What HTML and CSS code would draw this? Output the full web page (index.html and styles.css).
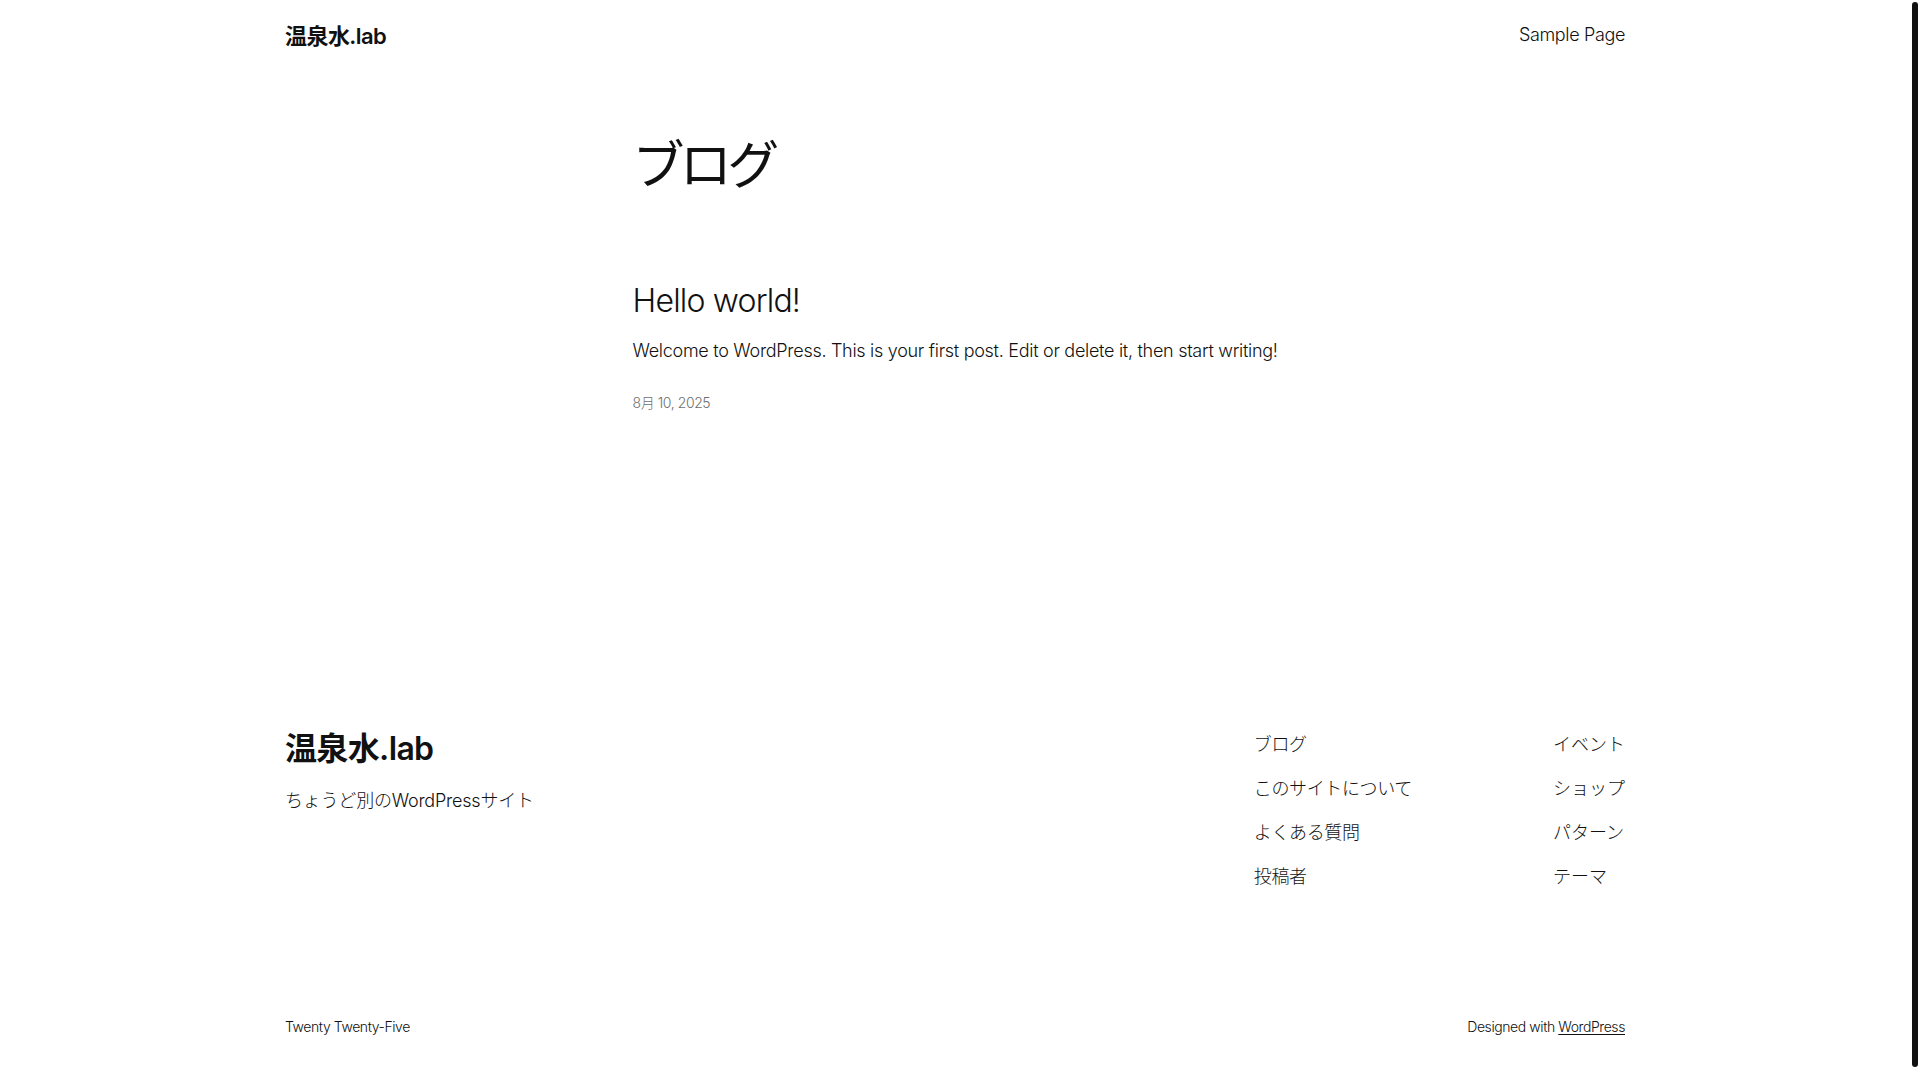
FILE: index.html
```html
<!DOCTYPE html>
<html lang="ja">
<head>
<meta charset="utf-8">
<title>ブログ – 温泉水.lab</title>
<link rel="stylesheet" href="styles.css">
</head>
<body>
<div class="site">
  <header class="site-header">
    <a class="site-title" href="#">温泉水.lab</a>
    <nav class="header-nav"><a href="#">Sample Page</a></nav>
  </header>

  <main class="content">
    <h1 class="page-title">ブログ</h1>
    <article class="post">
      <h2 class="post-title"><a href="#">Hello world!</a></h2>
      <p class="post-excerpt">Welcome to WordPress. This is your first post. Edit or delete it, then start writing!</p>
      <div class="post-date">8月 10, 2025</div>
    </article>
  </main>

  <footer class="site-footer">
    <div class="footer-row">
      <div class="footer-brand">
        <a class="footer-title" href="#">温泉水.lab</a>
        <p class="tagline">ちょうど別のWordPressサイト</p>
      </div>
      <div class="footer-navs">
        <ul class="footer-nav footer-nav-main">
          <li><a href="#">ブログ</a></li>
          <li><a href="#">このサイトについて</a></li>
          <li><a href="#">よくある質問</a></li>
          <li><a href="#">投稿者</a></li>
        </ul>
        <ul class="footer-nav footer-nav-extra">
          <li><a href="#">イベント</a></li>
          <li><a href="#">ショップ</a></li>
          <li><a href="#">パターン</a></li>
          <li><a href="#">テーマ</a></li>
        </ul>
      </div>
    </div>
    <div class="footer-bottom">
      <span>Twenty Twenty-Five</span>
      <span>Designed with <a class="underline" href="#">WordPress</a></span>
    </div>
  </footer>
</div>
<div class="scrollbar"></div>
</body>
</html>
```

FILE: styles.css
```css
html, body {
  margin: 0;
  padding: 0;
  background: #ffffff;
}

body {
  font-family: "Inter", "Noto Sans CJK JP", sans-serif;
  font-weight: 300;
  color: #111111;
  letter-spacing: -0.018em;
}

a {
  color: inherit;
  text-decoration: none;
}

.site {
  width: 1910px;
}

.site-header {
  width: 1340px;
  margin: 0 auto;
  height: 68px;
  display: flex;
  align-items: center;
  justify-content: space-between;
}

.site-title {
  font-size: 22px;
  font-weight: 600;
  letter-spacing: -0.025em;
}

.header-nav {
  font-size: 18px;
  letter-spacing: -0.02em;
}

.content {
  width: 645px;
  margin: 0 auto;
  padding-top: 67px;
}

.page-title {
  margin: 0;
  font-size: 52px;
  line-height: 62px;
  font-weight: 400;
  letter-spacing: -0.09em;
}

.post-title {
  margin: 85px 0 0;
  font-size: 32px;
  line-height: 38px;
  font-weight: 300;
  letter-spacing: -0.025em;
}

.post-excerpt {
  margin: 16px 0 0;
  font-size: 18px;
  line-height: 29px;
  letter-spacing: -0.016em;
  white-space: nowrap;
}

.post-date {
  margin-top: 28px;
  font-size: 14px;
  line-height: 20px;
  color: #6e6e6e;
  letter-spacing: -0.03em;
}

.site-footer {
  width: 1340px;
  margin: 315px auto 0;
  padding-bottom: 41px;
}

.footer-row {
  display: flex;
  justify-content: space-between;
  align-items: flex-start;
}

.footer-title {
  display: block;
  margin-top: 2px;
  font-size: 32px;
  line-height: 38px;
  font-weight: 600;
  letter-spacing: -0.02em;
}

.tagline {
  margin: 18px 0 0;
  font-size: 18px;
  line-height: 29px;
  letter-spacing: -0.012em;
}

.footer-navs {
  display: flex;
  gap: 141px;
  margin-top: 2px;
}

.footer-nav {
  list-style: none;
  margin: 0;
  padding: 0;
  display: flex;
  flex-direction: column;
  gap: 15px;
  font-size: 18px;
  line-height: 29px;
}

.footer-nav-main {
  letter-spacing: -0.02em;
}

.footer-nav-extra {
  letter-spacing: 0;
}

.footer-bottom {
  margin-top: 126px;
  display: flex;
  justify-content: space-between;
  font-size: 14px;
  line-height: 20px;
  letter-spacing: -0.03em;
}

.underline {
  text-decoration: underline;
  text-underline-offset: 2px;
}

.scrollbar {
  position: fixed;
  top: 2px;
  left: 1912px;
  width: 6px;
  height: 1065px;
  background: #111111;
  border-radius: 3px;
}
```
